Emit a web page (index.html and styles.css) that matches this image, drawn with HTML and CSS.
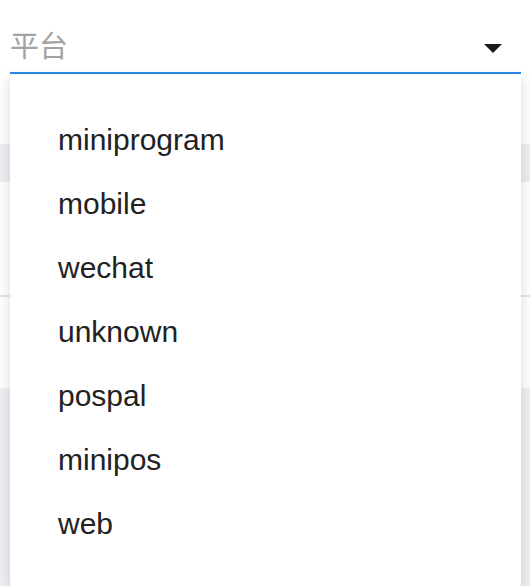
FILE: index.html
```html
<!DOCTYPE html>
<html>
<head>
    <meta charset="utf-8">
    <title>平台</title>
    <link rel="stylesheet" href="styles.css">
</head>
<body>
    <div class="select-field">
        <span class="placeholder">平台</span>
        <span class="arrow"></span>
    </div>

    <div class="page">
        <div class="row"></div>
        <div class="band"></div>
        <div class="row tall"></div>
        <div class="divider"></div>
        <div class="row mid"></div>
        <div class="footer-area"></div>
    </div>

    <ul class="menu">
        <li>miniprogram</li>
        <li>mobile</li>
        <li>wechat</li>
        <li>unknown</li>
        <li>pospal</li>
        <li>minipos</li>
        <li>web</li>
    </ul>
</body>
</html>
```

FILE: styles.css
```css
body {
    margin: 0;
    font-family: "Liberation Sans", "Noto Sans CJK SC", sans-serif;
    background-color: #fff;
    overflow: hidden;
}

.select-field {
    position: relative;
    margin: 0 9px 0 10px;
    height: 72px;
    border-bottom: 2px solid #2b8be6;
    display: flex;
    align-items: flex-end;
}

.select-field .placeholder {
    font-family: "Noto Sans CJK SC", sans-serif;
    font-size: 29px;
    line-height: 32px;
    color: #a3a3a3;
    margin-bottom: 12px;
}

.select-field .arrow {
    position: absolute;
    right: 19px;
    top: 44px;
    width: 0;
    height: 0;
    border-left: 9px solid transparent;
    border-right: 9px solid transparent;
    border-top: 9px solid #1a1a1a;
}

.page .row {
    height: 70px;
}

.page .band {
    height: 38px;
    background-color: #eeeff3;
}

.page .row.tall {
    height: 113px;
}

.page .divider {
    height: 2px;
    background-color: #e4e4ea;
}

.page .row.mid {
    height: 91px;
}

.page .footer-area {
    height: 198px;
    background-color: #eff0f4;
}

.menu {
    position: absolute;
    top: 75px;
    left: 10px;
    width: 511px;
    margin: 0;
    padding: 33px 0 30px;
    list-style: none;
    background-color: #fff;
    border-radius: 2px;
    box-shadow: 0 4px 14px rgba(0, 0, 0, 0.16);
}

.menu li {
    padding-left: 48px;
    font-size: 30px;
    line-height: 64px;
    color: #222;
}
```
